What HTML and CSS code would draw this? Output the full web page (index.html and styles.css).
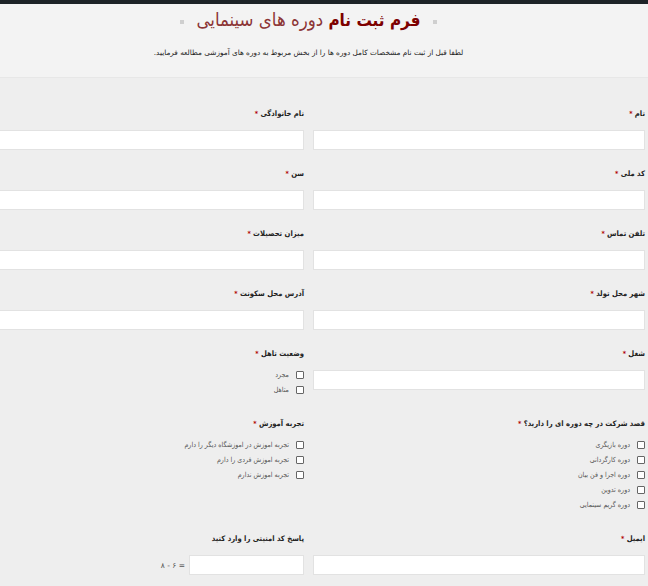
FILE: index.html
```html
<!DOCTYPE html>
<html lang="fa">
<head>
<meta charset="utf-8">
<title>فرم ثبت نام</title>
<link rel="stylesheet" href="styles.css">
</head>
<body>
<div class="topbar"></div>
<div class="page">
  <header class="header">
    <h1 class="title"><span class="sq"></span><b class="strong">فرم ثبت نام</b> <span class="light">دوره های سینمایی</span><span class="sq"></span></h1>
    <p class="intro">لطفا قبل از ثبت نام مشخصات کامل دوره ها را از بخش مربوط به دوره های آموزشی مطالعه فرمایید.</p>
  </header>
  <form class="form">
    <div class="field"><label class="lbl">نام <span class="req">*</span></label><input class="inp" type="text"></div>
    <div class="field"><label class="lbl">نام خانوادگی <span class="req">*</span></label><input class="inp" type="text"></div>

    <div class="field"><label class="lbl">کد ملی <span class="req">*</span></label><input class="inp" type="text"></div>
    <div class="field"><label class="lbl">سن <span class="req">*</span></label><input class="inp" type="text"></div>

    <div class="field"><label class="lbl">تلفن تماس <span class="req">*</span></label><input class="inp" type="text"></div>
    <div class="field"><label class="lbl">میزان تحصیلات <span class="req">*</span></label><input class="inp" type="text"></div>

    <div class="field"><label class="lbl">شهر محل تولد <span class="req">*</span></label><input class="inp" type="text"></div>
    <div class="field"><label class="lbl">آدرس محل سکونت <span class="req">*</span></label><input class="inp" type="text"></div>

    <div class="field"><label class="lbl">شغل <span class="req">*</span></label><input class="inp" type="text"></div>
    <div class="field"><label class="lbl">وضعیت تاهل <span class="req">*</span></label>
      <ul class="opts">
        <li class="opt"><span class="box"></span>مجرد</li>
        <li class="opt"><span class="box"></span>متاهل</li>
      </ul>
    </div>

    <div class="field"><label class="lbl">قصد شرکت در چه دوره ای را دارید؟ <span class="req">*</span></label>
      <ul class="opts">
        <li class="opt"><span class="box"></span>دوره بازیگری</li>
        <li class="opt"><span class="box"></span>دوره کارگردانی</li>
        <li class="opt"><span class="box"></span>دوره اجرا و فن بیان</li>
        <li class="opt"><span class="box"></span>دوره تدوین</li>
        <li class="opt"><span class="box"></span>دوره گریم سینمایی</li>
      </ul>
    </div>
    <div class="field"><label class="lbl">تجربه آموزش <span class="req">*</span></label>
      <ul class="opts">
        <li class="opt"><span class="box"></span>تجربه اموزش در اموزشگاه دیگر را دارم</li>
        <li class="opt"><span class="box"></span>تجربه اموزش فردی را دارم</li>
        <li class="opt"><span class="box"></span>تجربه اموزش ندارم</li>
      </ul>
    </div>

    <div class="field"><label class="lbl">ایمیل <span class="req">*</span></label><input class="inp" type="text"></div>
    <div class="field"><label class="lbl">پاسخ کد امنیتی را وارد کنید</label>
      <div class="captcha"><input class="inp small" type="text"><span class="eq">۸ - ۶ =</span></div>
    </div>
  </form>
</div>
</body>
</html>
```
FILE: styles.css
```css
html, body {
  margin: 0;
  padding: 0;
  background: #eeeeee;
  overflow: hidden;
}
body {
  font-family: "DejaVu Sans", sans-serif;
  color: #333;
}
.topbar {
  height: 4px;
  background: #1d2327;
}
.page {
  width: 673px;
  margin-left: -28px;
  direction: rtl;
}
.header {
  background: #f3f3f3;
  height: 73px;
  border-bottom: 1px solid #e7e7e7;
  margin-right: -3px;
  padding-right: 3px;
}
.title {
  margin: 0;
  padding-top: 2px;
  text-align: center;
  font-family: "DejaVu Sans Condensed", "DejaVu Sans", sans-serif;
  font-size: 18px;
  line-height: 28px;
  font-weight: normal;
}
.strong {
  color: #7d0000;
  font-weight: bold;
  font-size: 17px;
}
.light {
  font-size: 18.5px;
  color: #8c3535;
}
.sq {
  display: inline-block;
  width: 4px;
  height: 4px;
  background: #cfcfcf;
  margin: 0 12px;
  vertical-align: 2px;
}
.intro {
  margin: 14px 0 0;
  text-align: center;
  font-size: 7.3px;
  color: #222;
}
.form {
  display: grid;
  grid-template-columns: 332px 332px;
  column-gap: 9px;
  row-gap: 18px;
  padding-top: 30px;
}
.field {
  display: flex;
  flex-direction: column;
  align-items: stretch;
}
.lbl {
  font-family: "DejaVu Sans Condensed", "DejaVu Sans", sans-serif;
  font-size: 7.6px;
  font-weight: bold;
  line-height: 12px;
  height: 12px;
  margin-bottom: 10px;
  color: #222;
}
.req {
  color: #b00000;
  font-size: 7px;
}
.inp {
  display: block;
  box-sizing: border-box;
  height: 20px;
  width: 100%;
  margin: 0;
  border: 1px solid #e2e2e2;
  background: #fff;
}
.opts {
  list-style: none;
  margin: -3px 0 0;
  padding: 0 0 3px;
}
.opt {
  display: flex;
  align-items: center;
  gap: 7px;
  height: 15px;
  font-family: "DejaVu Sans Condensed", "DejaVu Sans", sans-serif;
  font-size: 7px;
  color: #555;
}
.box {
  width: 6px;
  height: 6px;
  border: 1px solid #666;
  border-radius: 1px;
  background: #fff;
  flex: none;
}
.captcha {
  display: flex;
  align-items: center;
  gap: 4px;
}
.inp.small {
  width: 115px;
}
.eq {
  direction: ltr;
  unicode-bidi: isolate;
  font-size: 7.5px;
  color: #555;
}
```
